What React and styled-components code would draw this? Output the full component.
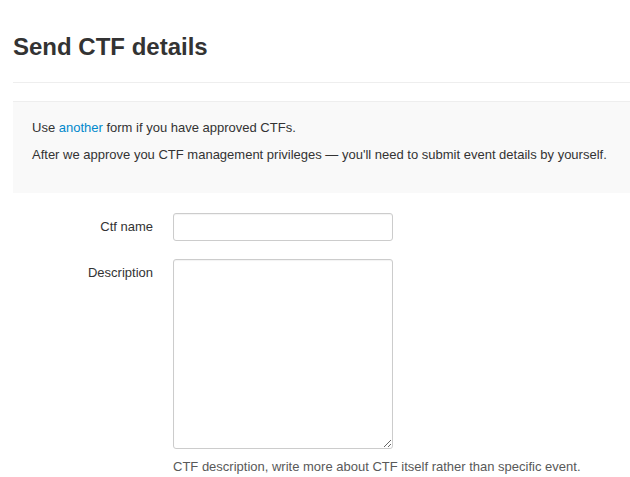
import React from "react";
import styled, { createGlobalStyle } from "styled-components";

const Global = createGlobalStyle`
  html, body { margin: 0; padding: 0; background: #fff; }
  body {
    font-family: "Liberation Sans", Arial, Helvetica, sans-serif;
    font-size: 13px;
    line-height: 18px;
    color: #333;
  }
`;

const Page = styled.div`
  padding-left: 13px;
  overflow: hidden;
`;

const Header = styled.div`
  padding-bottom: 20px;
  border-bottom: 1px solid #eee;
`;

const Title = styled.h2`
  margin: 32px 0 0;
  font-size: 24px;
  line-height: 30px;
  font-weight: bold;
  color: #333;
`;

const Well = styled.div`
  margin-top: 18px;
  background: #f9f9f9;
  border-top: 1px solid #eee;
  padding: 17px 19px 20px;
`;

const Para = styled.p`
  margin: 0 0 9px;
`;

const Link = styled.a`
  color: #0088cc;
  text-decoration: none;
`;

const Form = styled.form`
  margin-top: 20px;
  display: flex;
  flex-direction: column;
  gap: 18px;
`;

const Row = styled.div`
  display: grid;
  grid-template-columns: 140px 220px;
  column-gap: 20px;
  align-items: start;
`;

const Label = styled.label`
  text-align: right;
  padding-top: 5px;
  color: #333;
`;

const Controls = styled.div`
  display: flex;
  flex-direction: column;
`;

const Input = styled.input`
  box-sizing: border-box;
  width: 220px;
  height: 28px;
  border: 1px solid #ccc;
  border-radius: 3px;
  background: #fff;
  padding: 4px 6px;
  font: inherit;
  box-shadow: inset 0 1px 1px rgba(0,0,0,0.05);
  outline: none;
`;

const TextArea = styled.textarea`
  box-sizing: border-box;
  width: 220px;
  height: 190px;
  border: 1px solid #ccc;
  border-radius: 3px;
  background: #fff;
  padding: 4px 6px;
  font: inherit;
  box-shadow: inset 0 1px 1px rgba(0,0,0,0.05);
  outline: none;
`;

const Help = styled.span`
  display: block;
  margin-top: 9px;
  width: 460px;
  color: #595959;
`;

export default function App() {
  return (
    <Page>
      <Global />
      <Header>
        <Title>Send CTF details</Title>
      </Header>
      <Well>
        <Para>
          Use <Link href="#">another</Link> form if you have approved CTFs.
        </Para>
        <Para>
          After we approve you CTF management privileges — you'll need to submit event details by yourself.
        </Para>
      </Well>
      <Form>
        <Row>
          <Label htmlFor="name">Ctf name</Label>
          <Controls>
            <Input id="name" type="text" />
          </Controls>
        </Row>
        <Row>
          <Label htmlFor="desc">Description</Label>
          <Controls>
            <TextArea id="desc" />
            <Help>CTF description, write more about CTF itself rather than specific event.</Help>
          </Controls>
        </Row>
      </Form>
    </Page>
  );
}
